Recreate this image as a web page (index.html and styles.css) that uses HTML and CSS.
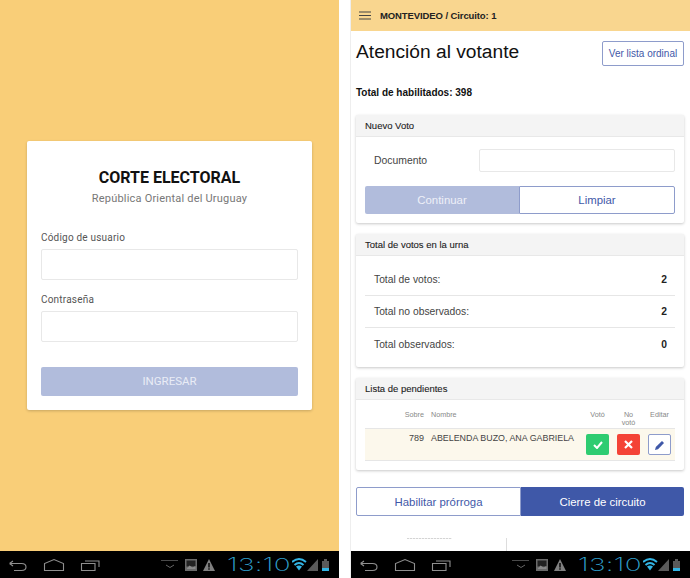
FILE: index.html
```html
<!DOCTYPE html>
<html lang="es">
<head>
<meta charset="utf-8">
<title>Corte Electoral</title>
<link rel="stylesheet" href="styles.css">
</head>
<body>
<div class="stage">
  <section class="phone phone-left">
    <main class="login-area">
      <form class="login-card">
        <h1 class="login-title">CORTE ELECTORAL</h1>
        <p class="login-sub">República Oriental del Uruguay</p>
        <label class="login-label">Código de usuario</label>
        <div class="login-input"></div>
        <label class="login-label second">Contraseña</label>
        <div class="login-input"></div>
        <div class="login-btn">INGRESAR</div>
      </form>
    </main>
    <footer class="navbar">
      <svg class="nav-keys" width="100" height="27" viewBox="0 0 100 27" fill="none" stroke="#8f8f8f" stroke-width="1.1"><path d="M1.500 12.500H13.500Q18 12.500 18 16T13.500 19.500H6M1.500 12.500l3.500-2.500M1.500 12.500l3.500 2.500"/><path d="M36.500 19.500V12.500L46 8.500l9.500 4v7z"/><path d="M73.500 12.500h13.500v7H73.500zM77 10h14v6"/></svg>
      <svg class="nav-status" width="54" height="27" viewBox="0 0 54 27"><path d="M0 9.500h17" stroke="#4a4a4a" fill="none"/><path d="M5 14l4 2.500 4-2.500" stroke="#666" fill="none"/><rect x="24" y="8" width="12" height="12" fill="#6a6a6a"/><rect x="25.500" y="9.500" width="9" height="6" fill="#222"/><path d="M25.500 18l3-3.500 3 2 3-1.500v3z" fill="#8a8a8a"/><path d="M42 20l6-12 6 12z" fill="#808080"/><rect x="47.300" y="12" width="1.400" height="4.500" fill="#000"/><rect x="47.300" y="17.300" width="1.400" height="1.400" fill="#000"/></svg>
      <span class="clock">13:10</span>
      <svg class="nav-signal" width="37" height="27" viewBox="0 0 37 27"><path d="M0 11Q7 5 14 11" stroke="#33b5e5" stroke-width="2" fill="none"/><path d="M2.500 14Q7 10 11.500 14" stroke="#33b5e5" stroke-width="2" fill="none"/><path d="M4 15.500Q7 13.500 10 15.500L7 19.500z" fill="#33b5e5"/><path d="M15 20L26 8v12z" fill="#5a5a5a"/><rect x="32" y="8" width="3" height="2" fill="#5a5a5a"/><rect x="30" y="10" width="7" height="7" fill="#5a5a5a"/><rect x="30" y="17" width="7" height="3" fill="#33b5e5"/></svg>
    </footer>
  </section>

  <section class="phone phone-right">
    <header class="topbar">
      <svg class="burger" width="12" height="9" viewBox="0 0 12 9" stroke="#444" stroke-width="1.100"><path d="M0 1h12M0 4.500h12M0 8h12"/></svg>
      <span class="topbar-text">MONTEVIDEO / Circuito: 1</span>
    </header>
    <main class="content">
      <div class="head-row">
        <h2 class="page-title">Atención al votante</h2>
        <div class="btn-outline">Ver lista ordinal</div>
      </div>
      <p class="total">Total de habilitados: 398</p>

      <div class="card">
        <div class="card-head">Nuevo Voto</div>
        <div class="card-body vote-body">
          <div class="doc-row">
            <span class="doc-label">Documento</span>
            <div class="doc-input"></div>
          </div>
          <div class="split">
            <div class="split-btn filled-light">Continuar</div>
            <div class="split-btn outlined">Limpiar</div>
          </div>
        </div>
      </div>

      <div class="card">
        <div class="card-head">Total de votos en la urna</div>
        <div class="card-body totals-body">
          <div class="stat"><span>Total de votos:</span><b>2</b></div>
          <div class="stat"><span>Total no observados:</span><b>2</b></div>
          <div class="stat last"><span>Total observados:</span><b>0</b></div>
        </div>
      </div>

      <div class="card">
        <div class="card-head">Lista de pendientes</div>
        <div class="card-body pending-body">
          <div class="tbl-head">
            <span class="col-sobre">Sobre</span>
            <span class="col-name">Nombre</span>
            <span class="col-act">Votó</span>
            <span class="col-act">No<br>votó</span>
            <span class="col-act">Editar</span>
          </div>
          <div class="tbl-row">
            <span class="col-sobre num">789</span>
            <span class="col-name person">ABELENDA BUZO, ANA GABRIELA</span>
            <span class="col-act"><span class="act green"><svg width="10" height="8" viewBox="0 0 10 8" fill="none" stroke="#fff" stroke-width="2"><path d="M1 4l3 3 5-6"/></svg></span></span>
            <span class="col-act"><span class="act red"><svg width="9" height="9" viewBox="0 0 9 9" fill="none" stroke="#fff" stroke-width="2.200"><path d="M1 1l7 7M8 1l-7 7"/></svg></span></span>
            <span class="col-act"><span class="act edit"><svg width="10" height="10" viewBox="0 0 10 10"><path d="M0 10l.8-3L7 1l2 2-6 6.200z" fill="#3f58a8"/></svg></span></span>
          </div>
        </div>
      </div>

      <div class="split bottom-split">
        <div class="split-btn outlined">Habilitar prórroga</div>
        <div class="split-btn filled">Cierre de circuito</div>
      </div>
      <div class="peek">
        <span class="peek-left"></span>
        <span class="peek-right"></span>
      </div>
    </main>
    <footer class="navbar">
      <svg class="nav-keys" width="100" height="27" viewBox="0 0 100 27" fill="none" stroke="#8f8f8f" stroke-width="1.1"><path d="M1.500 12.500H13.500Q18 12.500 18 16T13.500 19.500H6M1.500 12.500l3.500-2.500M1.500 12.500l3.500 2.500"/><path d="M36.500 19.500V12.500L46 8.500l9.500 4v7z"/><path d="M73.500 12.500h13.500v7H73.500zM77 10h14v6"/></svg>
      <svg class="nav-status" width="54" height="27" viewBox="0 0 54 27"><path d="M0 9.500h17" stroke="#4a4a4a" fill="none"/><path d="M5 14l4 2.500 4-2.500" stroke="#666" fill="none"/><rect x="24" y="8" width="12" height="12" fill="#6a6a6a"/><rect x="25.500" y="9.500" width="9" height="6" fill="#222"/><path d="M25.500 18l3-3.500 3 2 3-1.500v3z" fill="#8a8a8a"/><path d="M42 20l6-12 6 12z" fill="#808080"/><rect x="47.300" y="12" width="1.400" height="4.500" fill="#000"/><rect x="47.300" y="17.300" width="1.400" height="1.400" fill="#000"/></svg>
      <span class="clock">13:10</span>
      <svg class="nav-signal" width="37" height="27" viewBox="0 0 37 27"><path d="M0 11Q7 5 14 11" stroke="#33b5e5" stroke-width="2" fill="none"/><path d="M2.500 14Q7 10 11.500 14" stroke="#33b5e5" stroke-width="2" fill="none"/><path d="M4 15.500Q7 13.500 10 15.500L7 19.500z" fill="#33b5e5"/><path d="M15 20L26 8v12z" fill="#5a5a5a"/><rect x="32" y="8" width="3" height="2" fill="#5a5a5a"/><rect x="30" y="10" width="7" height="7" fill="#5a5a5a"/><rect x="30" y="17" width="7" height="3" fill="#33b5e5"/></svg>
    </footer>
  </section>
</div>
</body>
</html>
```
FILE: styles.css
```css
* { box-sizing: border-box; }
html, body { margin: 0; padding: 0; background: #fff; }
body { width: 690px; height: 578px; overflow: hidden; font-family: "Liberation Sans", Arial, sans-serif; }
.stage { display: flex; justify-content: space-between; width: 690px; height: 578px; }
.phone { display: flex; flex-direction: column; width: 339px; height: 578px; }

.navbar { flex: none; height: 27px; background: #000; display: flex; align-items: stretch; padding-left: 8px; }
.nav-keys { flex: none; }
.nav-status { flex: none; margin-left: 53px; }
.clock { flex: none; width: 62px; margin-left: 12px; margin-right: 3px; font: 200 18px/27px "Inter", sans-serif; color: #2f9fcb; white-space: nowrap; transform: scaleX(1.55); transform-origin: left center; letter-spacing: .2px; }
.nav-signal { flex: none; }

.login-area { flex: 1; background: #f9ce78; display: flex; align-items: flex-start; justify-content: center; padding-top: 141px; }
.login-card { width: 285px; height: 269px; background: #fff; border-radius: 2px; box-shadow: 0 1px 3px rgba(0,0,0,.2); padding: 26px 14px 0; }
.login-title { margin: 0; font: 700 16px/21px "Roboto", sans-serif; color: #111; text-align: center; }
.login-sub { margin: 3px 0 0; font: 400 11px/15px "Roboto", sans-serif; color: #777; text-align: center; letter-spacing: .2px; }
.login-label { display: block; margin-top: 25px; font: 400 10px/14px "Roboto", sans-serif; color: #555; letter-spacing: .2px; }
.login-label.second { margin-top: 13px; }
.login-input { height: 31px; margin-top: 4px; background: #fff; border: 1px solid #e8e8e8; border-radius: 2px; }
.login-btn { height: 29px; margin-top: 25px; background: #b1bcdc; border-radius: 2px; color: #e9ecf6; font: 400 11.500px/29px "Roboto", sans-serif; text-align: center; }

.phone-right { background: #fff; box-shadow: -1px 0 0 #eee; }
.topbar { flex: none; height: 31px; background: #f9d68f; display: flex; align-items: center; padding-left: 8px; gap: 9px; }
.burger { flex: none; }
.topbar-text { font-size: 9.500px; font-weight: 700; color: #222; letter-spacing: -.1px; }
.content { flex: 1; min-height: 0; padding: 0 6px 0 5px; overflow: hidden; }
.head-row { display: flex; justify-content: space-between; align-items: flex-start; padding-top: 10px; height: 55px; }
.page-title { margin: 0; font: 400 19.200px/22px "Liberation Sans", sans-serif; color: #111; }
.btn-outline { width: 82px; height: 25px; border: 1px solid #8e9ccb; border-radius: 2px; color: #3f58a8; font-size: 10px; line-height: 23px; text-align: center; }
.total { margin: 0; font-size: 10px; font-weight: 700; color: #111; line-height: 13px; }

.card { background: #fff; border-radius: 2px; box-shadow: 0 1px 3px rgba(0,0,0,.22); margin-top: 16px; }
.card + .card { margin-top: 11px; }
.card-head { height: 22px; background: #f4f4f4; border-bottom: 1px solid #e8e8e8; padding-left: 9px; font-size: 9.500px; line-height: 21px; color: #222; -webkit-text-stroke: .1px #222; }
.vote-body { padding: 12px 9px 9px; }
.doc-row { display: flex; align-items: center; height: 23px; }
.doc-label { width: 114px; padding-left: 9px; font-size: 10.400px; color: #444; }
.doc-input { flex: 1; height: 23px; border: 1px solid #e8e8e8; border-radius: 2px; }
.split { display: flex; height: 28px; margin-top: 14px; border-radius: 2px; }
.split-btn { flex: 1; display: flex; align-items: center; justify-content: center; font-size: 11.400px; }
.filled-light { background: #b1bcdc; color: #eef0f8; border-radius: 2px 0 0 2px; }
.outlined { background: #fff; border: 1px solid #8e9ccb; color: #3f58a8; border-radius: 0 2px 2px 0; }
.filled { background: #3f58a8; color: #fff; border-radius: 0 2px 2px 0; }
.bottom-split { margin-top: 17px; height: 29px; }
.bottom-split .outlined { border-radius: 2px 0 0 2px; }

.totals-body { padding: 8px 9px 0; height: 111px; }
.stat { display: flex; justify-content: space-between; align-items: center; height: 32px; padding: 0 8px 0 9px; border-bottom: 1px solid #e6e6e6; font-size: 10.300px; color: #444; }
.stat.last { border-bottom: 0; }
.stat b { color: #222; }

.pending-body { padding: 6px 9px 9px; }
.tbl-head, .tbl-row { display: flex; }
.tbl-head { height: 23px; border-bottom: 1px solid #e6e6e6; font-size: 7.200px; color: #888; line-height: 7.500px; padding-top: 5px; }
.tbl-row { height: 32px; background: #fcf8ec; border-bottom: 1px solid #e6e6e6; padding-top: 5px; }
.col-sobre { width: 59px; text-align: right; }
.col-name { width: 158px; padding-left: 7px; white-space: nowrap; }
.col-act { width: 31px; display: flex; justify-content: center; text-align: center; }
.num { font-size: 9px; color: #444; line-height: 9px; }
.person { font-size: 8.900px; color: #444; line-height: 9px; }
.act { width: 23px; height: 21px; display: flex; align-items: center; justify-content: center; border-radius: 2px; }
.green { background: #2ecc71; }
.red { background: #f44336; }
.edit { background: #fff; border: 1px solid #8e9ccb; }

.peek { display: flex; height: 14px; margin-top: 22px; }
.peek-left { height: 1px; margin-left: 51px; width: 45px; background: repeating-linear-gradient(90deg, #d4d4d4 0 2px, #f2f2f2 2px 3px); }
.peek-right { margin-left: 54px; border-left: 1px solid #ddd; }
```
